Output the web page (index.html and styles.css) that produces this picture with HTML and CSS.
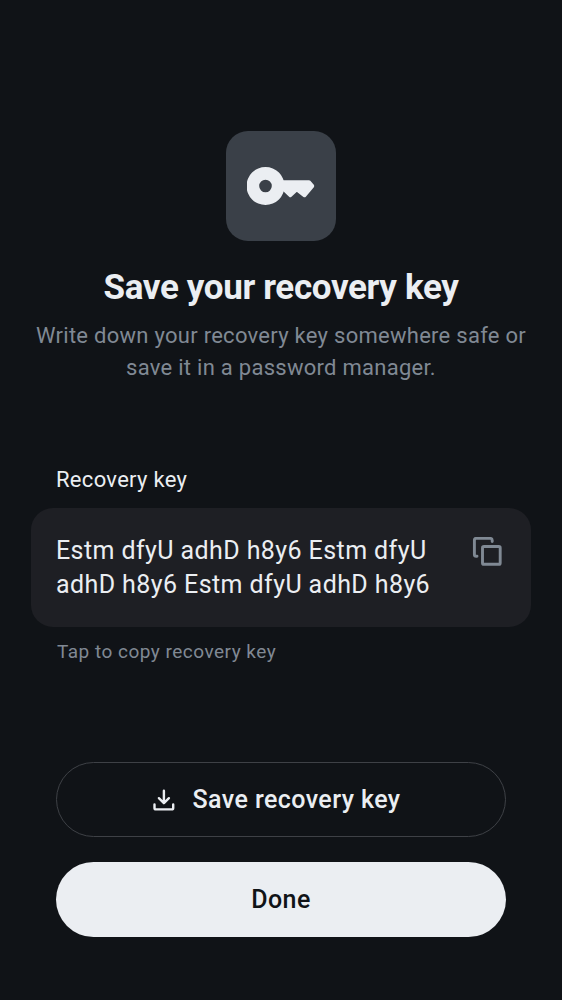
FILE: index.html
```html
<!DOCTYPE html>
<html lang="en">
<head>
<meta charset="utf-8">
<title>Save your recovery key</title>
<link rel="stylesheet" href="styles.css">
</head>
<body>
<main class="screen">
  <header class="intro">
    <div class="badge">
      <svg class="key" viewBox="0 0 68 38" width="68" height="38"><path fill-rule="evenodd" d="M18.500 0A19 19 0 1 1 18.500 38 19 19 0 0 1 18.500 0ZM18.500 12.700A6.300 6.300 0 1 0 18.500 25.300 6.300 6.300 0 0 0 18.500 12.700Z"/><path class="blade" d="M33 15H62L65.500 19 57.500 28.500 49.800 22.500 43.300 28.500 37 22.500H33Z"/></svg>
    </div>
    <h1 class="title">Save your recovery key</h1>
    <p class="subtitle">Write down your recovery key somewhere safe or<br>save it in a password manager.</p>
  </header>
  <section class="recovery">
    <h2 class="label">Recovery key</h2>
    <div class="key-card">
      <p class="code">Estm dfyU adhD h8y6 Estm dfyU<br>adhD h8y6 Estm dfyU adhD h8y6</p>
      <svg class="copy" viewBox="0 0 30 30" width="30" height="30"><path d="M5 19.200H4.200Q2.400 19.200 2.400 17.400V3.200Q2.400 1.400 4.200 1.400H18.400Q20.200 1.400 20.200 3.200V4.600M12 9.500H26.800Q28.200 9.500 28.200 10.900V25.900Q28.200 27.300 26.800 27.300H12Q10.500 27.300 10.500 25.900V10.900Q10.500 9.500 12 9.500Z"/></svg>
    </div>
    <p class="hint">Tap to copy recovery key</p>
  </section>
  <footer class="actions">
    <button class="button outline"><svg class="download" viewBox="0 0 24 24" width="24" height="24"><path d="M11.900 2.700V15M6.900 10.200L11.900 15.200L16.900 10.200M2.500 16.500V19.900Q2.500 21.400 4 21.400H19.700Q21.200 21.400 21.200 19.900V16.500"/></svg><span>Save recovery key</span></button>
    <button class="button filled">Done</button>
  </footer>
</main>
</body>
</html>
```
FILE: styles.css
```css
* { box-sizing: border-box; margin: 0; padding: 0; }
body { background: #101317; color: #ebeef2; font-family: Roboto, sans-serif; }
.screen { width: 562px; height: 1000px; padding-top: 131px; overflow: hidden; }
.intro { display: flex; flex-direction: column; align-items: center; }
.badge { width: 109.500px; height: 109.500px; border-radius: 22px; background: #3a4048; display: grid; place-items: center; }
.key { fill: #ebeef2; }
.blade { stroke: #ebeef2; stroke-width: 3.500; stroke-linejoin: round; }
.title { margin-top: 26.500px; font-size: 35px; line-height: 42px; font-weight: 700; letter-spacing: -.36px; white-space: nowrap; }
.subtitle { margin-top: 11px; font-size: 22px; line-height: 31.500px; letter-spacing: .27px; color: #808994; text-align: center; white-space: nowrap; }
.recovery { margin: 82px 31px 0; }
.label { padding-left: 25px; font-size: 22px; line-height: 30px; font-weight: 400; letter-spacing: .3px; }
.key-card { margin-top: 13px; height: 119px; border-radius: 22px; background: #1e1f24; padding: 26px 29px 0 25px; display: flex; justify-content: space-between; }
.code { font-size: 25px; line-height: 34px; letter-spacing: .41px; white-space: nowrap; }
.copy { margin-top: 3px; fill: none; stroke: #808994; stroke-width: 2.900; stroke-linecap: round; }
.hint { margin-top: 12px; padding-left: 26px; font-size: 19px; line-height: 26px; letter-spacing: .49px; color: #808994; }
.actions { margin: 97.400px 56px 0; display: grid; gap: 25px; }
.button { height: 75px; border-radius: 38px; font: 500 25px/34px Roboto, sans-serif; letter-spacing: .43px; display: flex; align-items: center; justify-content: center; gap: 16px; }
.outline { background: transparent; border: 1.500px solid #3e4146; color: #ebeef2; padding-right: 9px; }
.filled { background: #ebeef2; border: 0; color: #101317; }
.download { fill: none; stroke: currentColor; stroke-width: 2.400; stroke-linecap: round; stroke-linejoin: round; }
```
